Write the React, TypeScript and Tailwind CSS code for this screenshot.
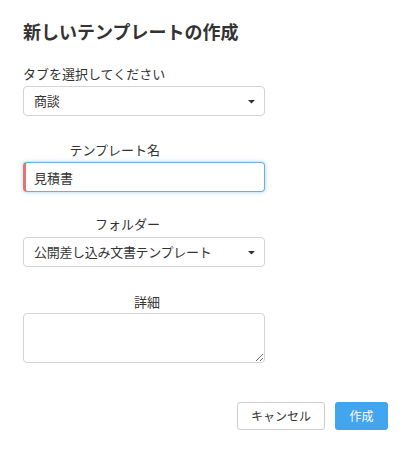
import { useState } from 'react'

const font = { fontFamily: '"Noto Sans CJK JP", "Noto Sans", sans-serif' }

function Caret() {
  return (
    <svg className="absolute right-[9px] top-[13px]" width="7" height="4" viewBox="0 0 7 4">
      <path d="M0 0h7L3.5 3.5z" fill="#333" />
    </svg>
  )
}

function SelectBox({ value }: { value: string }) {
  return (
    <div className="relative flex h-[30px] w-[242px] items-center rounded-[4px] border border-[#d4d4d4] bg-white pl-[10px] text-[13px] tracking-[-0.3px] text-[#333]">
      <span>{value}</span>
      <Caret />
    </div>
  )
}

export default function App() {
  const [name, setName] = useState('見積書')
  const [detail, setDetail] = useState('')

  return (
    <div className="min-h-[449px] w-[418px] bg-white pl-[23px] pr-[30px] text-[#333]" style={font}>
      <h2 className="pt-[19px] text-[18px] font-bold leading-[24px] text-[#333]">新しいテンプレートの作成</h2>

      <div className="mt-[22px] text-[13px] leading-[18px]">タブを選択してください</div>
      <div className="mt-[3px]">
        <SelectBox value="商談" />
      </div>

      <div className="mt-[25px] w-[137px] text-right text-[13px] leading-[18px]">テンプレート名</div>
      <div className="mt-[3px] w-[242px]">
        <input
          value={name}
          onChange={(e) => setName(e.target.value)}
          className="h-[30px] w-full rounded-[4px] border border-[#66afe9] border-l-[3px] border-l-[#e57373] bg-white pl-[8px] text-[13px] text-[#333] shadow-[0_0_4px_rgba(102,175,233,.6)] outline-none"
        />
      </div>

      <div className="mt-[23px] w-[137px] text-right text-[13px] leading-[18px]">フォルダー</div>
      <div className="mt-[4px]">
        <SelectBox value="公開差し込み文書テンプレート" />
      </div>

      <div className="mt-[26px] w-[137px] text-right text-[13px] leading-[18px]">詳細</div>
      <div className="mt-[2px]">
        <textarea
          value={detail}
          onChange={(e) => setDetail(e.target.value)}
          className="block h-[50px] w-[242px] rounded-[4px] border border-[#d4d4d4] bg-white text-[13px] outline-none"
        />
      </div>

      <div className="mt-[39px] flex justify-end gap-[10px]">
        <button
          type="button"
          className="h-[28px] w-[88px] rounded-[3px] border border-[#ccc] bg-white text-[12px] text-[#333]"
        >
          キャンセル
        </button>
        <button type="button" className="h-[28px] w-[53px] rounded-[3px] bg-[#42a5ee] text-[12px] text-white">
          作成
        </button>
      </div>
    </div>
  )
}
